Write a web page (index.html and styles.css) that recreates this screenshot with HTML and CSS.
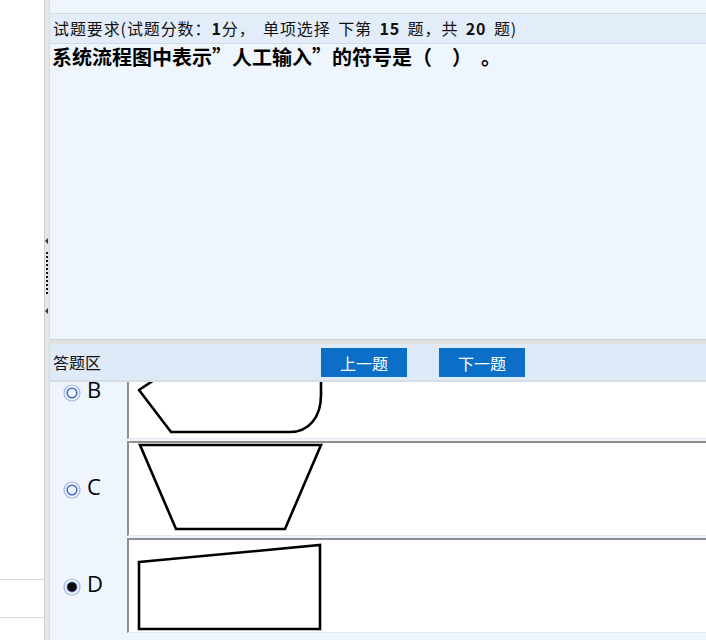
FILE: index.html
```html
<!DOCTYPE html>
<html lang="zh-CN">
<head>
<meta charset="utf-8">
<title>试题</title>
<link rel="stylesheet" href="styles.css">
</head>
<body>
<div class="app">
  <aside class="side">
    <div class="side-row first"></div>
    <div class="side-row"></div>
  </aside>
  <div class="vsplit">
    <svg class="grip" width="6" height="80" viewBox="0 0 6 80">
      <path d="M1 5 L4 2 L4 8 Z" fill="#333"/>
      <g fill="#111">
        <rect x="2" y="16" width="2" height="2"/>
        <rect x="2" y="20" width="2" height="2"/>
        <rect x="2" y="24" width="2" height="2"/>
        <rect x="2" y="28" width="2" height="2"/>
        <rect x="2" y="32" width="2" height="2"/>
        <rect x="2" y="36" width="2" height="2"/>
        <rect x="2" y="40" width="2" height="2"/>
        <rect x="2" y="44" width="2" height="2"/>
        <rect x="2" y="48" width="2" height="2"/>
        <rect x="2" y="52" width="2" height="2"/>
        <rect x="2" y="56" width="2" height="2"/>
      </g>
      <path d="M1 75 L4 72 L4 78 Z" fill="#333"/>
    </svg>
  </div>
  <main class="main">
    <div class="top-strip"></div>
    <div class="q-head">试题要求(试题分数：<b>1</b>分， 单项选择 下第 <b>15</b> 题，共 <b>20</b> 题)</div>
    <div class="q-body">
      <p class="q-text">系统流程图中表示”人工输入”的符号是（　）&nbsp;&nbsp;。</p>
    </div>
    <div class="hsplit"></div>
    <div class="a-head">
      <span class="a-title">答题区</span>
      <div class="a-btns">
        <button class="btn">上一题</button>
        <button class="btn">下一题</button>
      </div>
    </div>
    <div class="opts">
      <div class="opt-list">
        <div class="opt">
          <label class="opt-label">
            <svg class="radio" width="18" height="18" viewBox="0 0 18 18"><circle cx="9" cy="9" r="8" fill="none" stroke="#9fb2e2" stroke-width="1.2"/><circle cx="9" cy="9" r="4.8" fill="none" stroke="#4a68c6" stroke-width="1.6"/></svg>
            <span class="letter">B</span>
          </label>
          <div class="opt-fig">
            <svg width="220" height="93" viewBox="129 346 220 93">
              <path d="M172 368 L139 390 L171 432 L290 432 C309 432 321 417 321 395 L321 366" fill="none" stroke="#000" stroke-width="2.6" stroke-linejoin="round"/>
            </svg>
          </div>
        </div>
        <div class="opt">
          <label class="opt-label">
            <svg class="radio" width="18" height="18" viewBox="0 0 18 18"><circle cx="9" cy="9" r="8" fill="none" stroke="#9fb2e2" stroke-width="1.2"/><circle cx="9" cy="9" r="4.8" fill="none" stroke="#4a68c6" stroke-width="1.6"/></svg>
            <span class="letter">C</span>
          </label>
          <div class="opt-fig">
            <svg width="220" height="93" viewBox="129 443 220 93">
              <polygon points="140,445 321,445 285,529 176,529" fill="none" stroke="#000" stroke-width="2.6"/>
            </svg>
          </div>
        </div>
        <div class="opt">
          <label class="opt-label">
            <svg class="radio" width="18" height="18" viewBox="0 0 18 18"><circle cx="9" cy="9" r="8" fill="none" stroke="#9fb2e2" stroke-width="1.2"/><circle cx="9" cy="9" r="5" fill="#0a0a0a" stroke="#4a68c6" stroke-width="0.8"/></svg>
            <span class="letter">D</span>
          </label>
          <div class="opt-fig">
            <svg width="220" height="93" viewBox="129 540 220 93">
              <polygon points="139,562 320,545 320,629 139,629" fill="none" stroke="#000" stroke-width="2.6"/>
            </svg>
          </div>
        </div>
      </div>
    </div>
  </main>
</div>
</body>
</html>
```
FILE: styles.css
```css
* { box-sizing: border-box; }
html, body {
  margin: 0;
  padding: 0;
  width: 706px;
  height: 640px;
  overflow: hidden;
  background: #ffffff;
  font-family: "Noto Sans CJK SC", "Noto Sans", sans-serif;
}
.app {
  display: flex;
  height: 640px;
}
.side {
  width: 44px;
  flex: none;
  background: #ffffff;
  display: flex;
  flex-direction: column;
  padding-top: 579px;
}
.side-row {
  height: 38px;
  border-top: 1px solid #d9d9d9;
}
.side-row + .side-row { height: 1px; }
.vsplit {
  width: 6px;
  flex: none;
  background: #e6e6e6;
  border-left: 1px solid #cfcfcf;
  border-right: 1px solid #dadada;
  display: flex;
  flex-direction: column;
  align-items: center;
  padding-top: 236px;
}
.grip { display: block; flex: none; margin-left: -1px; }
.main {
  flex: 1;
  display: flex;
  flex-direction: column;
  background: #eef5fd;
  min-width: 0;
}
.top-strip {
  height: 14px;
  flex: none;
  border-bottom: 1px solid #d3dae3;
}
.q-head {
  height: 30px;
  flex: none;
  background: #e3edf9;
  border-bottom: 1px solid #d3dae3;
  font-size: 16px;
  line-height: 29px;
  padding-left: 3px;
  color: #111;
  white-space: nowrap;
  word-spacing: 3px;
  letter-spacing: 0.9px;
}
.q-head b { font-weight: 700; }
.q-body {
  height: 295px;
  flex: none;
}
.q-text {
  margin: 0;
  padding-left: 2px;
  font-size: 20px;
  font-weight: 700;
  line-height: 26px;
  color: #000;
  white-space: nowrap;
}
.hsplit {
  height: 5px;
  flex: none;
  background: #e0e0e0;
  border-top: 1px solid #cecece;
}
.a-head {
  height: 38px;
  flex: none;
  background: #dfeaf8;
  border-bottom: 2px solid #d7dde4;
  display: flex;
  align-items: flex-start;
  padding-left: 3px;
}
.a-title {
  font-size: 16px;
  line-height: 36px;
  color: #111;
  width: 268px;
  flex: none;
}
.a-btns {
  display: flex;
  gap: 32px;
  padding-top: 4px;
}
.btn {
  width: 86px;
  height: 29px;
  border: none;
  background: #0b6fc8;
  color: #ffffff;
  font-family: "Noto Sans CJK SC", sans-serif;
  font-size: 16px;
  padding: 0;
  margin: 0;
}
.opts {
  flex: 1;
  overflow: hidden;
  min-height: 0;
}
.opt-list {
  margin-top: -38px;
  display: flex;
  flex-direction: column;
}
.opt {
  display: flex;
  height: 97px;
  padding-bottom: 2px;
}
.opt-label {
  width: 77px;
  flex: none;
  display: flex;
  align-items: center;
  padding-left: 13px;
  padding-top: 2px;
  gap: 6px;
}
.radio { display: block; flex: none; }
.letter {
  font-family: "Open Sans", "Noto Sans", sans-serif;
  font-size: 22px;
  color: #000;
  line-height: 1;
  margin-top: -7px;
}
.opt-fig {
  flex: 1;
  background: #ffffff;
  border-top: 2px solid #8f8f8f;
  border-left: 2px solid #8f8f8f;
  border-bottom: 1px solid #e6e9ee;
}
.opt-fig svg { display: block; }
```
